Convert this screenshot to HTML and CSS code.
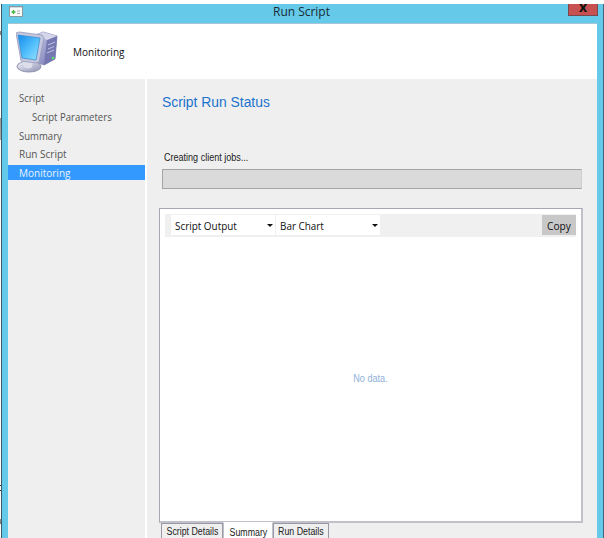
FILE: index.html
```html
<!DOCTYPE html>
<html lang="en">
<head>
<meta charset="utf-8">
<title>Run Script</title>
<link rel="stylesheet" href="styles.css">
</head>
<body>
<div class="window">
  <div class="titlebar">
    <svg class="app-icon" width="14" height="11" viewBox="0 0 14 11"><rect x=".5" y=".5" width="13" height="10" fill="#fafafa" stroke="#8b989c"/><path d="M1 1.5h12" stroke="#d4dadd"/><path d="M2.500 6h4M4.500 4v4" stroke="#43b649" stroke-width="1.500"/><path d="M8 5h3M8 7.500h3" stroke="#aaa"/></svg>
    <span class="title">Run Script</span>
    <div class="close">x</div>
  </div>
  <div class="client">
    <header class="header">
      <svg class="computer" width="44" height="42" viewBox="0 0 44 42">
        <defs>
          <linearGradient id="screen" x1="0" y1="0" x2="1" y2="1"><stop offset="0" stop-color="#168bea"/><stop offset=".5" stop-color="#4dbcfb"/><stop offset="1" stop-color="#9be5ff"/></linearGradient>
          <linearGradient id="side" x1="0" y1="0" x2="1" y2="1"><stop offset="0" stop-color="#cbcdea"/><stop offset="1" stop-color="#686ba9"/></linearGradient>
          <linearGradient id="metal" x1="0" y1="0" x2="1" y2="1"><stop offset="0" stop-color="#f5f6fb"/><stop offset="1" stop-color="#8d90b4"/></linearGradient>
        </defs>
        <path d="M20 4L27 1 41 5 39 28 28 34 20 31Z" fill="url(#side)" stroke="#9093bb"/>
        <path d="M31 9L41 5 39 28 28 34Z" fill="#7477b0"/>
        <path d="M20 4L27 1 41 5 31 9Z" fill="#d4d6e9"/>
        <path d="M32 14l7-3M32 18l6-2.500M31 22l7-3" stroke="#b7badb" stroke-width="1.300"/>
        <circle cx="37" cy="27" r="1.300" fill="#62df67"/>
        <ellipse cx="13" cy="35.500" rx="12" ry="5.500" fill="url(#metal)" stroke="#9093ad"/>
        <path d="M5 25L17 30 16 36Q12 39 8 36Z" fill="#dcdeea"/>
        <path d="M0 2L3 1 26 4 28 7 23 31 20 32 5 30Z" fill="#c4c7dd" stroke="#9699bd" stroke-width=".8"/>
        <path d="M2 4L24 7 20 29 6 27Z" fill="url(#screen)" stroke="#3d8fd1" stroke-width=".8"/>
      </svg>
      <span class="heading">Monitoring</span>
    </header>
    <div class="body">
      <nav class="nav">
        <div class="item"><span>Script</span></div>
        <div class="item sub"><span>Script Parameters</span></div>
        <div class="item"><span>Summary</span></div>
        <div class="item"><span class="wide">Run Script</span></div>
        <div class="item selected"><span class="wide">Monitoring</span></div>
      </nav>
      <main class="main">
        <h1>Script Run Status</h1>
        <p class="status">Creating client jobs...</p>
        <div class="progress"></div>
        <section class="panel">
          <div class="toolbar">
            <div class="combo"><span>Script Output</span><i class="arrow"></i></div>
            <div class="combo"><span>Bar Chart</span><i class="arrow"></i></div>
            <div class="copy"><span>Copy</span></div>
          </div>
          <div class="empty">No data.</div>
        </section>
        <div class="tabs">
          <div class="tab"><span>Script Details</span></div>
          <div class="tab active"><span>Summary</span></div>
          <div class="tab last"><span>Run Details</span></div>
        </div>
      </main>
    </div>
  </div>
</div>
</body>
</html>
```
FILE: styles.css
```css
* { box-sizing: border-box; }
body { margin: 0; width: 604px; height: 538px; overflow: hidden; padding: 4px 0 0 1px; color: #222;
  background: linear-gradient(#333, #333) 0 485px / 1px 1px no-repeat, linear-gradient(#333, #333) 0 490px / 1px 1px no-repeat, linear-gradient(#999, #777) 0 519px / 1px 5px no-repeat, linear-gradient(#999, #aaa) 0 118px / 1px 22px no-repeat, linear-gradient(#888, #888) 0 31px / 1px 4px no-repeat, #fff;
  font: 11px/15px "Open Sans", "Noto Sans", sans-serif; white-space: nowrap; }
.window { height: 534px; background: #65c9e9; border-left: 1px solid #3c5965; border-right: 1px solid #3c6879; padding: 0 6px; }
.titlebar { height: 20px; display: flex; position: relative; border-bottom: 1px solid #a6c6d5; }
.app-icon { margin: 2px 0 0 1px; }
.title { font-size: 13px; line-height: 14px; margin-left: 250px; color: #172c35; transform: scaleX(.92); transform-origin: left; }
.close { position: absolute; right: -1px; top: 0; width: 30px; height: 12px; background: #c75050; border: 1px solid #78484f; border-top: 0; text-align: center; font: bold 14px/5px "Open Sans", sans-serif; color: #111; }
.client { height: 514px; background: #efefef; }
.header { height: 55px; background: #fff; display: flex; align-items: center; }
.computer { margin-left: 8px; margin-top: 1px; }
.heading { margin-left: 13px; color: #111; transform: scaleX(.91); transform-origin: left; }
.body { display: flex; height: 459px; }
.nav { width: 139px; border-right: 2px solid #fff; padding-top: 11px; }
.item { height: 15px; margin-bottom: 3.750px; padding-left: 11px; line-height: 15px; color: #555; }
.item span, .combo span { display: inline-block; transform: scaleX(.87); transform-origin: left; }
.item .wide { transform: scaleX(.91); }
.item.sub { padding-left: 24px; }
.item.selected { background: #3399ff; color: #e8f3ff; }
.main { flex: 1; padding-left: 12px; font-family: "Liberation Sans", sans-serif; }
h1 { margin: 14px 0 0 3px; font-size: 14px; line-height: 18px; font-weight: 400; color: #1c73cd; transform: scaleX(.99); transform-origin: left; }
.status { margin: 39px 0 0 5px; font-size: 10.500px; line-height: 14px; transform: scaleX(.86); transform-origin: left; }
.progress { margin: 5px 0 0 3px; width: 420px; height: 20px; background: #dadada; border: 1px solid #a5a5a5; border-right-color: #cfcfcf; }
.panel { margin-top: 19px; width: 424px; height: 315px; background: #fff; border: 1px solid #a7a7b3; border-right: 2px solid #c1c1cc; border-bottom: 2px solid #c1c1cc; padding: 5px; }
.toolbar { height: 23px; width: 411px; background: #f0f0f0; display: flex; padding: 1px 0 2px 6px; gap: 1px; font-family: "Open Sans", sans-serif; color: #111; }
.combo { width: 104px; height: 20px; background: #fff; display: flex; align-items: center; justify-content: space-between; padding: 0 2px 0 4px; }
.combo span { transform: scaleX(.9); }
.arrow { border: 3px solid transparent; border-top: 3px solid #111; border-bottom: 0; }
.copy { margin-left: auto; width: 34px; background: #c8c8c8; text-align: center; line-height: 21px; }
.copy span { display: inline-block; transform: scaleX(.92); }
.empty { text-align: center; margin-top: 134px; font-size: 10px; line-height: 16px; color: #91b0d8; transform: scaleX(.91); }
.tabs { display: flex; padding-left: 2px; }
.tab { height: 15px; width: 62px; border: 1px solid #9999a3; border-bottom: 0; text-align: center; font-size: 10px; line-height: 16px; }
.tab span { display: inline-block; transform: scaleX(.88); }
.tab.active { margin-top: -1px; height: 16px; width: 50px; background: #fff; border-color: #c1c1cc; border-top-color: #fff; line-height: 20px; }
.tab.last { width: 56px; }
```
